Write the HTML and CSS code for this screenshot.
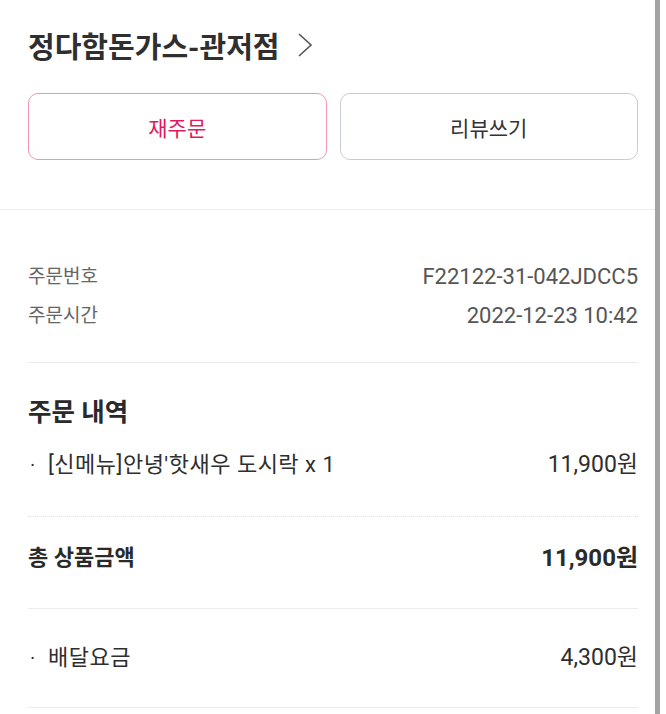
FILE: index.html
```html
<!DOCTYPE html>
<html lang="ko">
<head>
<meta charset="utf-8">
<link rel="stylesheet" href="styles.css">
</head>
<body>
<div class="page">
  <main class="content">
    <section class="store">
      <h1 class="store-title">정다함돈가스-관저점
        <svg class="chev" width="16" height="26" viewBox="0 0 16 26"><path d="M2 2 L14 13 L2 24" fill="none" stroke="#555" stroke-width="1.6"/></svg>
      </h1>
      <div class="btns">
        <button class="btn btn-pink">재주문</button>
        <button class="btn btn-gray">리뷰쓰기</button>
      </div>
    </section>
    <div class="full-divider"></div>
    <section class="info">
      <div class="info-row"><span class="lbl">주문번호</span><span class="val">F22122-31-042JDCC5</span></div>
      <div class="info-row"><span class="lbl">주문시간</span><span class="val">2022-12-23 10:42</span></div>
    </section>
    <div class="divider"></div>
    <section class="orders">
      <h2 class="orders-title">주문 내역</h2>
      <div class="item-row"><span class="item"><span class="dot">·</span>[신메뉴]안녕'핫새우 도시락 x 1</span><span class="price">11,900원</span></div>
    </section>
    <div class="divider dotted"></div>
    <div class="total-row"><span>총 상품금액</span><span class="total-price">11,900원</span></div>
    <div class="divider"></div>
    <div class="item-row fee"><span class="item"><span class="dot">·</span>배달요금</span><span class="price">4,300원</span></div>
    <div class="divider"></div>
  </main>
  <div class="scrollbar"></div>
</div>
</body>
</html>
```
FILE: styles.css
```css
* { box-sizing: border-box; }
html, body { margin: 0; padding: 0; background: #fff; }
body { font-family: Roboto, "Noto Sans CJK KR", sans-serif; color: #333; }
.page { display: flex; width: 666px; height: 714px; overflow: hidden; }
.content { width: 655px; flex: none; }
.scrollbar { width: 5px; flex: none; background: #a3a3a3; }
.store { padding: 24px 17px 0 28px; }
.store-title { margin: 0; font-size: 29px; font-weight: 700; color: #2f2f2f; display: flex; align-items: center; height: 42px; }
.chev { margin-left: 17px; }
.btns { display: flex; gap: 13px; margin-top: 27px; }
.btn { flex: 1; height: 67px; border-radius: 10px; background: #fff; font-family: inherit; font-size: 21px; font-weight: 400; }
.btn-pink { border: 1.5px solid #f295b4; color: #e2195d; }
.btn-gray { border: 1.5px solid #c8cdd5; color: #333; }
.full-divider { height: 1px; background: #eeeeee; margin-top: 49px; }
.info { padding: 53px 17px 32px 28px; display: flex; flex-direction: column; gap: 11px; }
.info-row { display: flex; justify-content: space-between; align-items: center; line-height: 28px; }
.lbl { color: #666; font-size: 19px; }
.val { color: #555; font-size: 22px; }
.divider { height: 1px; background: #ececec; margin: 0 17px 0 28px; }
.divider.dotted { background: none; border-top: 1px dotted #e2e2e2; }
.orders { padding: 34px 17px 37px 28px; }
.orders-title { margin: 0 0 24px; font-size: 25.5px; font-weight: 700; color: #2a2a2a; line-height: 30px; }
.item-row { display: flex; justify-content: space-between; align-items: center; font-size: 22px; line-height: 28px; color: #2e2e2e; }
.item { letter-spacing: 0.5px; }
.price { font-size: 23px; }
.dot { display: inline-block; width: 20px; padding-left: 2px; font-size: 20px; letter-spacing: 0; }
.total-row { display: flex; justify-content: space-between; align-items: center; padding: 26px 17px 35px 28px; font-size: 22px; font-weight: 700; line-height: 30px; color: #2a2a2a; }
.total-price { font-size: 24px; }
.fee { padding: 35px 17px 35px 28px; }
```
